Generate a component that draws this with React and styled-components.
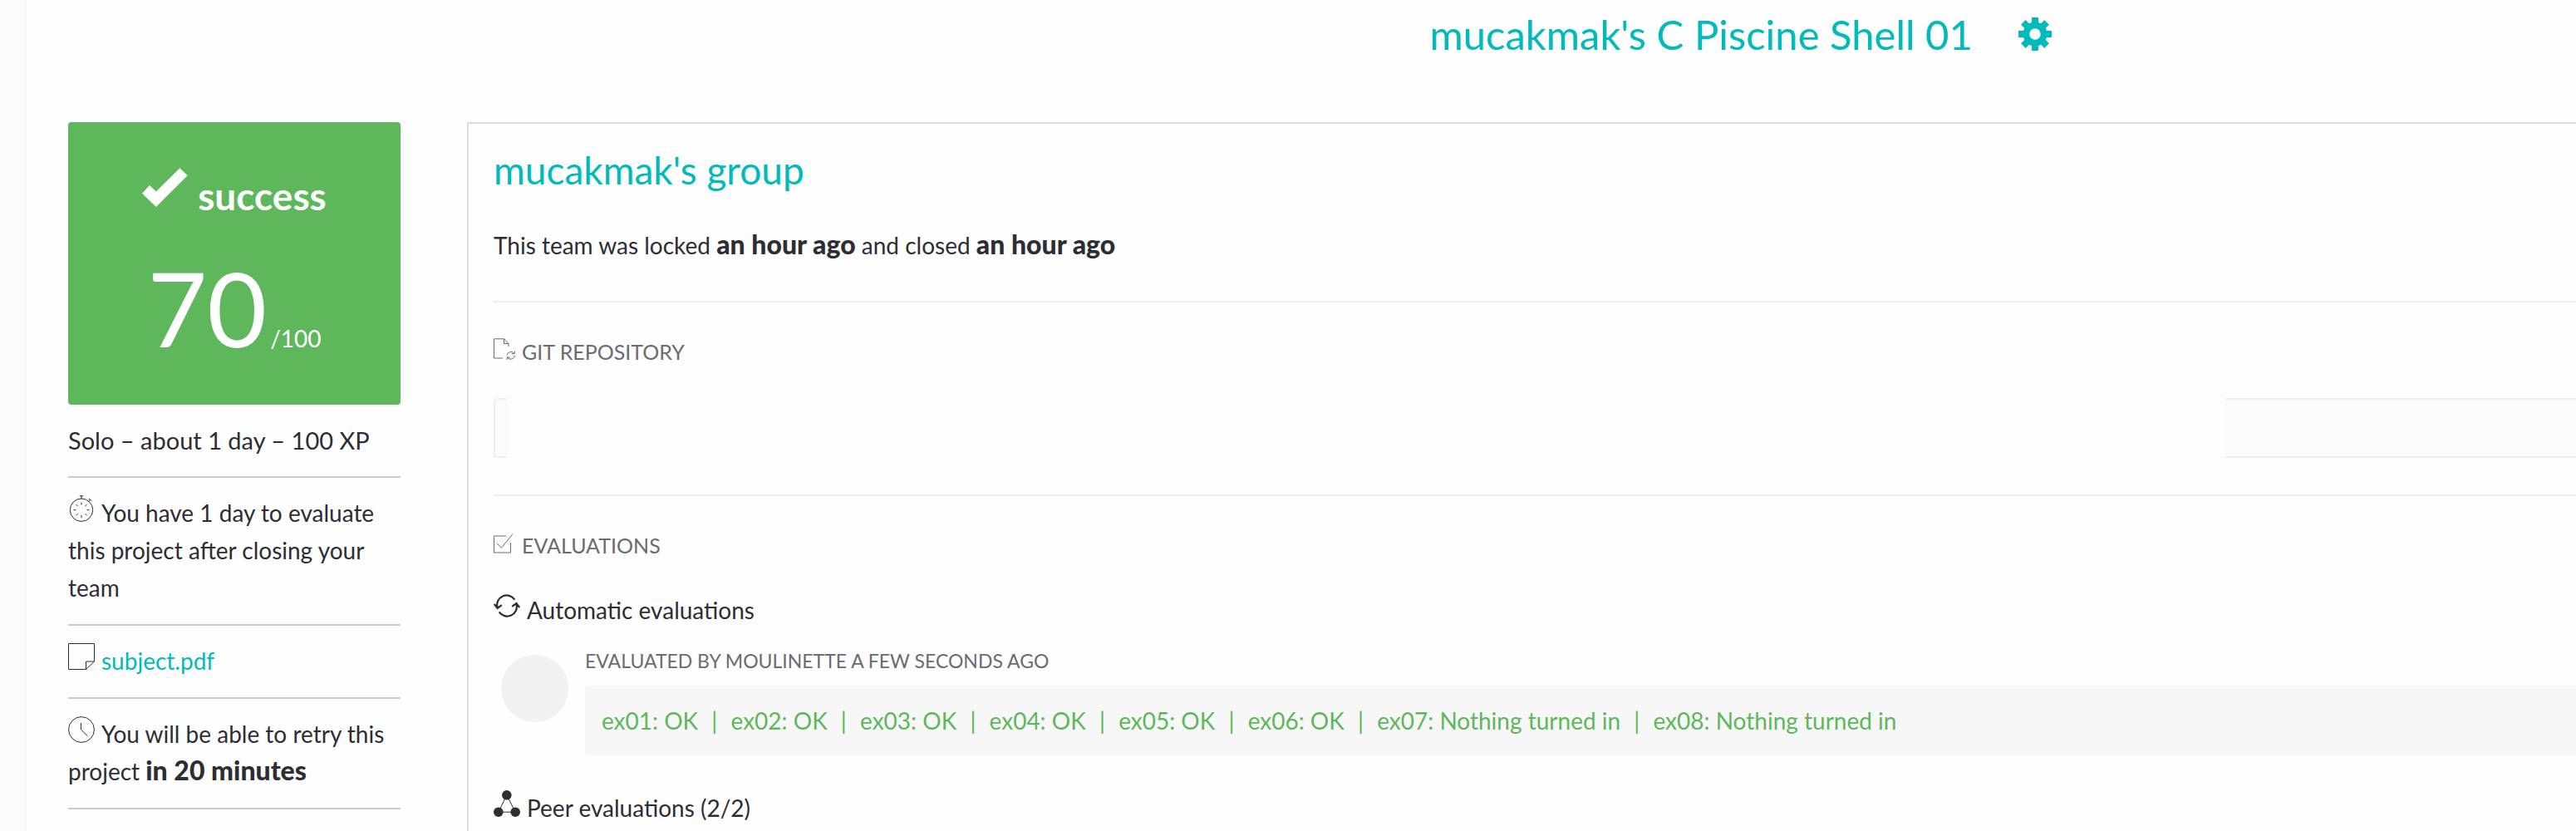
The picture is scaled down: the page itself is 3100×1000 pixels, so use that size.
import React, { Fragment } from 'react';
import styled, { createGlobalStyle } from 'styled-components';

const teal = '#00babc';
const ink = '#2d2d35';
const green = '#5eb75b';

const GlobalStyle = createGlobalStyle`
  *, *::before, *::after { box-sizing: border-box; }
  body {
    margin: 0;
    background: #fefefe;
    color: ${ink};
    font-family: Lato, "Liberation Sans", sans-serif;
    font-size: 28px;
    line-height: 45px;
  }
  h1, h2, h3, h4, p, ul { margin: 0; padding: 0; font-weight: 400; }
`;

const Shell = styled.div`
  display: flex;
  min-height: 100vh;
`;

const Rail = styled.div`
  flex: 0 0 32px;
  border-right: 2px solid #f8f8f8;
  background: #fafafa;
`;

const Page = styled.div`
  display: flex;
  flex: 1;
  flex-direction: column;
  min-width: 0;
`;

const Header = styled.header`
  display: flex;
  align-items: center;
  justify-content: center;
  gap: 54px;
  padding: 11px 0 76px 34.5%;
  color: ${teal};
`;

const PageTitle = styled.h1`
  font-size: 49px;
  line-height: 60px;
  white-space: nowrap;
`;

const IconButton = styled.button`
  display: flex;
  padding: 0;
  border: 0;
  background: none;
  color: inherit;
  cursor: pointer;
`;

const Columns = styled.div`
  display: flex;
  flex: 1;
  align-items: stretch;
  gap: 80px;
  padding-left: 50px;
`;

const Sidebar = styled.aside`
  flex: 0 0 400px;
`;

const ScoreCard = styled.section`
  display: flex;
  flex-direction: column;
  align-items: center;
  gap: 34px;
  height: 340px;
  padding-top: 55px;
  border-radius: 4px;
  background: ${green};
  color: #fff;
`;

const Status = styled.div`
  display: flex;
  align-items: flex-start;
  gap: 12px;
  font-size: 46px;
  font-weight: 700;
  line-height: 68px;
`;

const Score = styled.div`
  display: flex;
  align-items: baseline;
  gap: 4px;
  font-size: 124px;
  line-height: 132px;
`;

const ScoreMax = styled.span`
  font-size: 28px;
  line-height: 45px;
`;

const InfoList = styled.ul`
  list-style: none;
`;

const InfoItem = styled.li`
  padding: 20px 0 21px;
  border-bottom: 2px solid #ccc;
  font-size: ${(p) => (p.$lead ? 29 : 28)}px;
`;

const Strong = styled.strong`
  font-size: 32px;
  font-weight: 900;
  line-height: 1;
`;

const Unbroken = styled.span`
  display: inline-block;
  white-space: nowrap;
`;

const Link = styled.a`
  color: ${teal};
  text-decoration: none;
`;

const Icon = styled.svg`
  width: ${(p) => p.$size}px;
  height: ${(p) => p.$size}px;
  margin-right: 8px;
  vertical-align: baseline;
  fill: none;
  stroke: currentColor;
`;

const Panel = styled.main`
  flex: 1;
  min-width: 0;
  padding: 26px 0 0 30px;
  border-top: 2px solid #ddd;
  border-left: 2px solid #ddd;
`;

const GroupTitle = styled.h2`
  color: ${teal};
  font-size: 46px;
  line-height: 60px;
`;

const TeamState = styled.p`
  margin-top: 38px;
`;

const Section = styled.section`
  margin-top: 44px;
  padding-top: 37px;
  border-top: 2px solid #eee;
`;

const SectionTitle = styled.h3`
  color: #6b6b70;
  font-size: 25px;
  text-transform: uppercase;
`;

const FieldWrap = styled.div`
  position: relative;
  display: flex;
  margin-top: 33px;
`;

const Field = styled.input`
  flex: 1;
  height: 72px;
  padding: 0 20px;
  border: 2px solid #eee;
  border-right: 0;
  border-radius: 4px 0 0 4px;
  background: #fbfbfb;
  color: inherit;
  font: inherit;
`;

const Cover = styled.div`
  position: absolute;
  top: -26px;
  left: 17px;
  width: 82.5%;
  height: 108px;
  background: #fdfdfd;
`;

const SubTitle = styled.h4`
  margin-top: ${(p) => p.$gap}px;
`;

const Evaluation = styled.article`
  display: flex;
  gap: 20px;
  margin-top: 23px;
  padding-left: 9px;
`;

const Avatar = styled.div`
  flex: 0 0 81px;
  height: 81px;
  margin-top: 8px;
  border-radius: 50%;
  background: #f1f1f1;
`;

const EvaluationBody = styled.div`
  flex: 1;
  min-width: 0;
`;

const Evaluator = styled.p`
  color: #6b6b70;
  font-size: 23px;
  line-height: 30px;
  text-transform: uppercase;
`;

const Feedback = styled.p`
  margin-top: 15px;
  padding: 20px;
  border-radius: 4px 0 0 4px;
  background: #f7f7f7;
  color: ${green};
`;

const Separator = styled.span`
  margin: 0 9px;
`;

const Gear = () => (
  <svg width="42" height="42" viewBox="0 0 42 42" fill="currentColor" aria-hidden="true">
    <path
      fillRule="evenodd"
      d="M21 6.5a14.5 14.5 0 1 0 0 29a14.5 14.5 0 1 0 0-29zM21 14.2a6.8 6.8 0 1 1 0 13.6a6.8 6.8 0 1 1 0-13.6z"
    />
    {[0, 45, 90, 135, 180, 225, 270, 315].map((angle) => (
      <path key={angle} d="M17 1h8v9h-8z" transform={`rotate(${angle} 21 21)`} />
    ))}
  </svg>
);

const Check = () => (
  <svg width="55" height="48" viewBox="0 0 55 48" fill="currentColor" aria-hidden="true">
    <path d="M0 30.7L9 21l7.8 7.6L45.4.3l9.3 9L16.8 47z" />
  </svg>
);

const Stopwatch = () => (
  <Icon $size={32} viewBox="0 0 32 32" aria-hidden="true">
    <circle cx="16" cy="17.7" r="13.7" />
    <path d="M16 .8V4M13.8.8h4.4M24.5 7.5l2-2M25 4.2l3.5 2.6M16 8.5v3M16 24v3.2M6.5 17.7h3M22.5 17.7h3M9.5 11l2.2 2.2M20.5 22.2l2.2 2.2M22.5 11l-2.2 2.2M11.7 22.2l-2.2 2.2" />
  </Icon>
);

const Note = () => (
  <Icon $size={32} viewBox="0 0 32 32" aria-hidden="true">
    <path d="M.5.5h31V22L21.5 31.5H.5zM31.5 22h-10v9.5" />
  </Icon>
);

const Clock = () => (
  <Icon $size={32} viewBox="0 0 32 32" aria-hidden="true">
    <circle cx="16" cy="16" r="15.4" />
    <path d="M15.5 8v8l8 7.8" />
  </Icon>
);

const FileSync = () => (
  <Icon $size={26} viewBox="0 0 26 26" aria-hidden="true">
    <path d="M11 24H.5V.8h12L18 6.5V10M12.5.8v5.7H18" />
    <path d="M16 20.5a5 5 0 0 1 8.8-2.2M25.6 15.5l-.5 3.3-3.2-.4M25.5 21a5 5 0 0 1-8.8 2.4M15.9 26l.5-3.3 3.2.4" />
  </Icon>
);

const CheckedBox = () => (
  <Icon $size={26} viewBox="0 0 26 26" aria-hidden="true">
    <path d="M15 5H.5v20h20V13M4 14l5.5 5.2L23 2.5" />
  </Icon>
);

const Refresh = () => (
  <Icon $size={32} viewBox="0 0 32 32" strokeWidth="2.2" aria-hidden="true">
    <path d="M4.6 18A11.5 11.5 0 0 1 25.3 8.6M.8 14l3.8 5 5.2-3.8M27.4 14A11.5 11.5 0 0 1 6.7 23.4M31.2 18l-3.8-5-5.2 3.8" />
  </Icon>
);

const Peers = () => (
  <Icon $size={32} viewBox="0 0 32 32" aria-hidden="true">
    <path d="M15.8 5.8L5.8 26.2h20.4z" />
    <g fill="currentColor" stroke="none">
      <circle cx="15.8" cy="5.8" r="5.8" />
      <circle cx="5.8" cy="26.2" r="5.8" />
      <circle cx="26.2" cy="26.2" r="5.8" />
    </g>
  </Icon>
);

const results = [
  'ex01: OK',
  'ex02: OK',
  'ex03: OK',
  'ex04: OK',
  'ex05: OK',
  'ex06: OK',
  'ex07: Nothing turned in',
  'ex08: Nothing turned in',
];

export default function App() {
  return (
    <>
      <GlobalStyle />
      <Shell>
        <Rail />
        <Page>
          <Header>
            <PageTitle>mucakmak's C Piscine Shell 01</PageTitle>
            <IconButton type="button" aria-label="Settings">
              <Gear />
            </IconButton>
          </Header>
          <Columns>
            <Sidebar>
              <ScoreCard>
                <Status>
                  <Check />
                  <span>success</span>
                </Status>
                <Score>
                  <span>70</span>
                  <ScoreMax>/100</ScoreMax>
                </Score>
              </ScoreCard>
              <InfoList>
                <InfoItem $lead>Solo – about 1 day – 100 XP</InfoItem>
                <InfoItem>
                  <Stopwatch />
                  You have 1 day to evaluate this project after closing your team
                </InfoItem>
                <InfoItem>
                  <Note />
                  <Link href="#subject">subject.pdf</Link>
                </InfoItem>
                <InfoItem>
                  <Clock />
                  You will be able to retry this{' '}
                  <Unbroken>
                    project <Strong>in 20 minutes</Strong>
                  </Unbroken>
                </InfoItem>
              </InfoList>
            </Sidebar>
            <Panel>
              <GroupTitle>mucakmak's group</GroupTitle>
              <TeamState>
                This team was locked <Strong>an hour ago</Strong> and closed{' '}
                <Strong>an hour ago</Strong>
              </TeamState>
              <Section>
                <SectionTitle>
                  <FileSync />
                  <label htmlFor="repository">Git repository</label>
                </SectionTitle>
                <FieldWrap>
                  <Field id="repository" type="text" readOnly />
                  <Cover />
                </FieldWrap>
              </Section>
              <Section>
                <SectionTitle>
                  <CheckedBox />
                  Evaluations
                </SectionTitle>
                <SubTitle $gap={33}>
                  <Refresh />
                  Automatic evaluations
                </SubTitle>
                <Evaluation>
                  <Avatar />
                  <EvaluationBody>
                    <Evaluator>Evaluated by moulinette a few seconds ago</Evaluator>
                    <Feedback>
                      {results.map((result, index) => (
                        <Fragment key={result}>
                          {index > 0 && <Separator> | </Separator>}
                          {result}
                        </Fragment>
                      ))}
                    </Feedback>
                  </EvaluationBody>
                </Evaluation>
                <SubTitle $gap={40}>
                  <Peers />
                  Peer evaluations (2/2)
                </SubTitle>
              </Section>
            </Panel>
          </Columns>
        </Page>
      </Shell>
    </>
  );
}
